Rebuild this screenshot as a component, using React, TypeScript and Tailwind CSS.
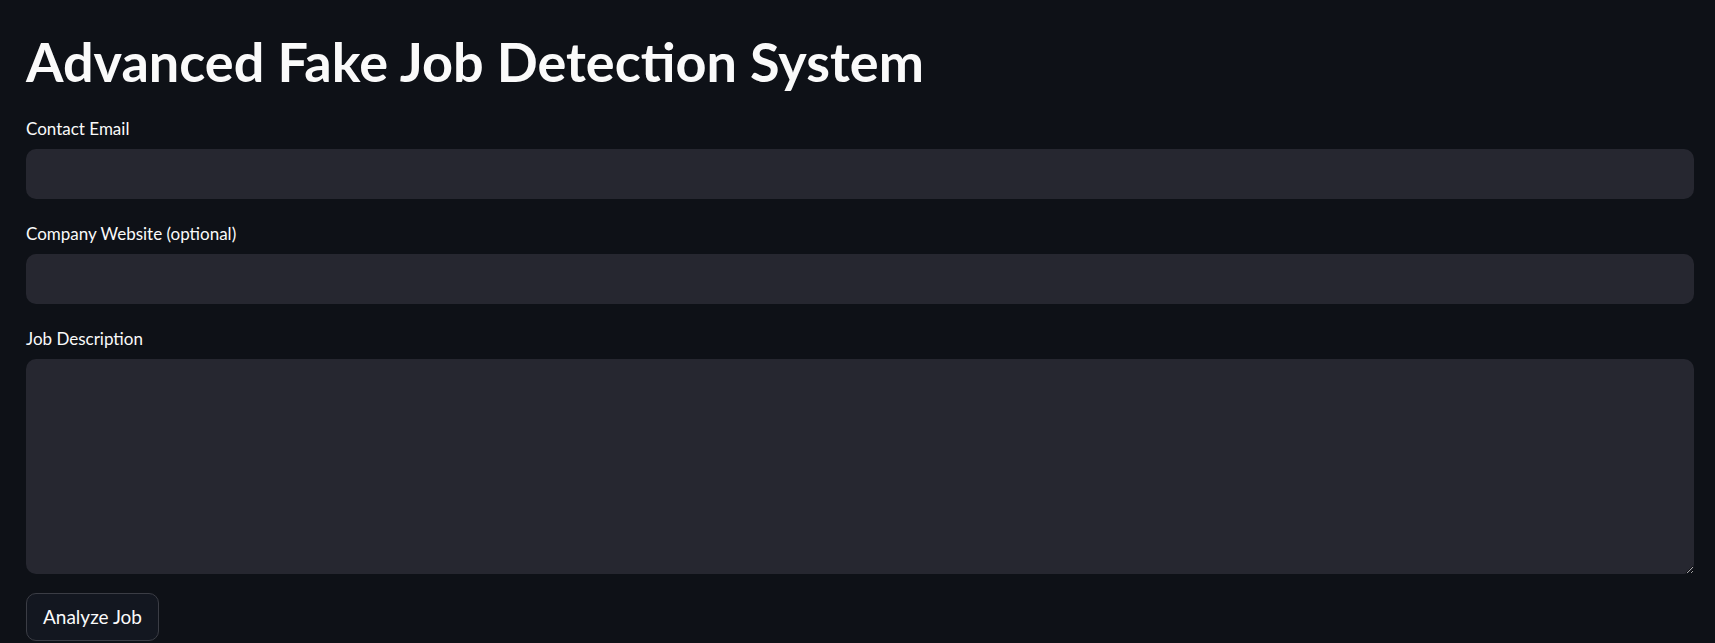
import React from 'react';

const Field: React.FC<{ label: string; tall?: boolean }> = ({ label, tall }) => (
  <div className="flex flex-col">
    <label className="text-[17px] leading-[24px] text-[#fafafa] mb-[8px]">{label}</label>
    {tall ? (
      <textarea className="h-[215px] w-full rounded-[10px] bg-[#262730] outline-none resize-y p-4 text-[#fafafa]" />
    ) : (
      <input className="h-[50px] w-full rounded-[10px] bg-[#262730] outline-none px-4 text-[#fafafa]" />
    )}
  </div>
);

export default function App() {
  return (
    <div className="min-h-[643px] bg-[#0e1117] pl-[26px] pr-[21px] pt-[30px] font-['Lato','Noto_Sans',sans-serif] text-[#fafafa]">
      <h1 className="text-[54px] leading-[64px] font-bold mb-[23px]">Advanced Fake Job Detection System</h1>
      <div className="flex flex-col gap-[23px]">
        <Field label="Contact Email" />
        <Field label="Company Website (optional)" />
        <Field label="Job Description" tall />
      </div>
      <button className="mt-[19px] h-[48px] w-[133px] rounded-[10px] border border-[#3b3d45] bg-[#131720] text-[19px] text-[#fafafa]">
        Analyze Job
      </button>
    </div>
  );
}
